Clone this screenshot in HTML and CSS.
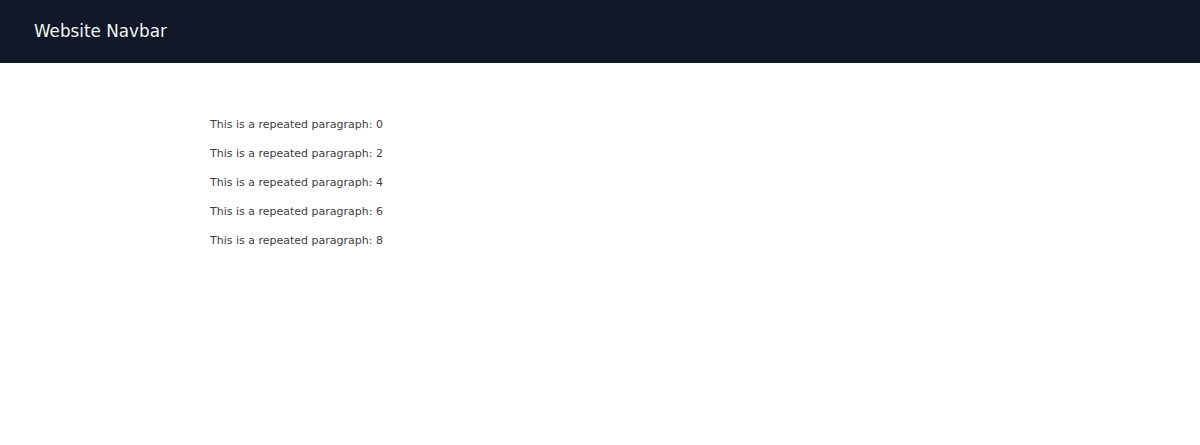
FILE: index.html
```html
<!DOCTYPE html>
<html>
<head>
<meta charset="utf-8">
<link rel="stylesheet" href="styles.css">
</head>
<body>
<header class="navbar">
  <span class="brand">Website Navbar</span>
</header>
<main class="content">
  <p class="para">This is a repeated paragraph: 0</p>
  <p class="para">This is a repeated paragraph: 2</p>
  <p class="para">This is a repeated paragraph: 4</p>
  <p class="para">This is a repeated paragraph: 6</p>
  <p class="para">This is a repeated paragraph: 8</p>
</main>
</body>
</html>
```
FILE: styles.css
```css
* { box-sizing: border-box; }
html, body {
  margin: 0;
  padding: 0;
  background: #ffffff;
  font-family: "DejaVu Sans", sans-serif;
}
.navbar {
  height: 63px;
  background: #111827;
  display: flex;
  align-items: center;
  padding-left: 34px;
  padding-bottom: 2px;
}
.brand {
  color: #f3f4f6;
  font-size: 16.8px;
}
.content {
  max-width: 780px;
  margin: 0 auto;
  padding-top: 47px;
  display: flex;
  flex-direction: column;
}
.para {
  margin: 0;
  height: 29px;
  line-height: 29px;
  font-size: 11px;
  color: #404040;
}
```
